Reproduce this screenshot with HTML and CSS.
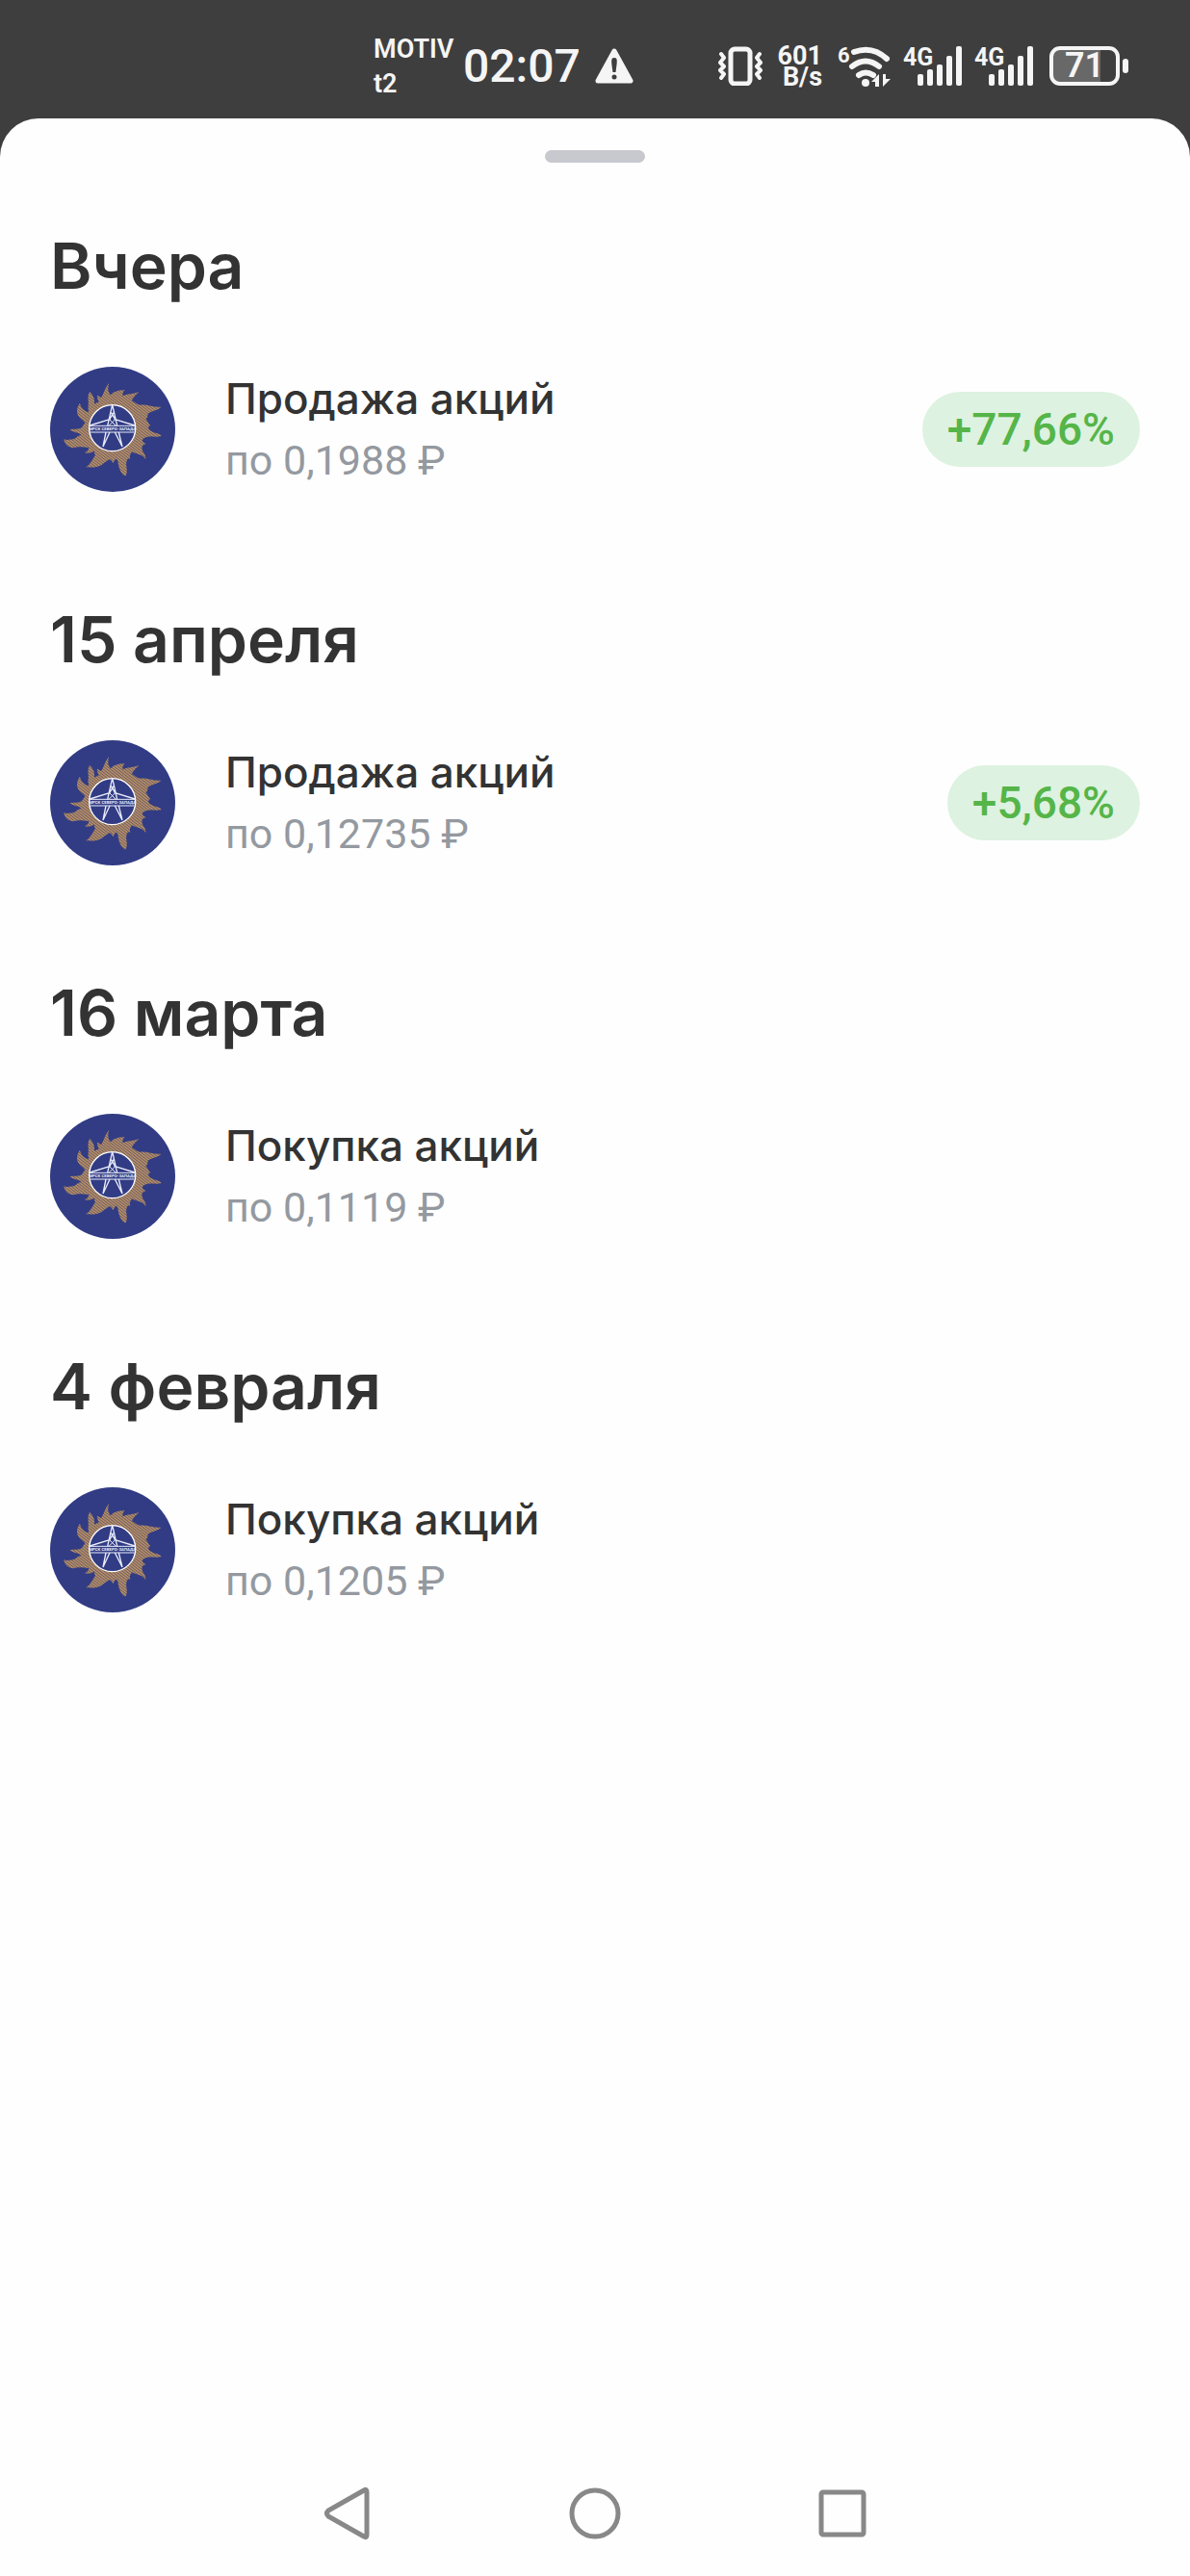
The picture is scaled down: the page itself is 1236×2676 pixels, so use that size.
FILE: index.html
```html
<!DOCTYPE html>
<html lang="ru">
<head>
    <meta charset="UTF-8">
    <meta name="viewport" content="width=device-width, initial-scale=1.0">
    <title>История сделок</title>
    <link rel="stylesheet" href="styles.css">
</head>
<body>
    <!-- Shared drawings -->
    <svg class="defs" aria-hidden="true">
        <defs>
            <pattern id="hatch" width="7" height="7" patternUnits="userSpaceOnUse" patternTransform="rotate(38)">
                <rect width="7" height="7" fill="#b38d66"/>
                <rect width="7" height="2" fill="#5d5063"/>
            </pattern>
        </defs>
        <symbol id="logo" viewBox="36 33 390 390">
            <circle cx="231" cy="228" r="195" fill="#313c84"/>
            <path fill="url(#hatch)" d="M220 84C214 101 217 113 225 121C232 112 246 106 269 106C262 112 261 119 263 124C276 116 294 119 313 111C305 121 294 127 291 139C301 143 305 150 315 152C338 149 358 160 382 158C369 171 353 169 343 178C337 184 344 190 334 196C342 203 341 211 349 216C341 219 340 225 346 230C357 240 370 237 384 248C367 255 347 246 330 255C318 262 325 269 335 273C324 276 321 281 323 290C324 301 336 306 334 321C321 303 304 307 292 298C284 305 283 315 286 321C281 317 278 319 275 326C269 342 282 355 271 374C259 368 252 354 249 339C247 329 249 321 240 320C237 325 235 330 231 334C231 328 227 324 222 322C205 330 196 345 178 345C170 349 162 344 147 346C161 338 165 326 177 308C174 302 172 298 175 294C166 303 155 303 142 301C152 299 156 292 157 285C138 284 126 280 110 286C92 285 83 276 78 258C88 263 98 260 108 259C116 257 121 247 134 246C129 239 112 240 97 229C109 225 121 229 132 224C139 221 136 215 145 209C143 201 127 195 123 184C117 171 121 157 129 146C132 163 144 172 155 174C158 169 153 165 155 156C158 142 150 128 159 111C170 120 176 133 174 148C179 149 181 142 188 143C186 136 181 127 183 122C189 124 190 129 196 128C205 114 207 97 220 84Z"/>
            <circle cx="230" cy="224" r="72" fill="#313c84" stroke="#fff" stroke-width="4"/>
            <g fill="none" stroke="#e9ebfa" stroke-width="4">
                <path d="M158 217H302M162 237H298" stroke-width="3"/>
                <path d="M230 151L215 217M230 151L245 217M210 237L201 282L222 237M250 237L261 282L238 237M226 176L239 197M234 176L221 197M160 216L224 196M300 216L236 196"/>
                <path d="M221 197L241 217M239 197L219 217" stroke-width="3"/>
            </g>
            <text class="logo-text" x="230" y="232" text-anchor="middle">МРСК СЕВЕРО-ЗАПАДА</text>
        </symbol>
        <symbol id="signal" viewBox="0 0 62 41">
            <text class="net-text" x="0" y="20">4G</text>
            <rect x="15" y="29" width="6" height="12" rx="2"/>
            <rect x="25" y="24" width="6" height="17" rx="2"/>
            <rect x="35" y="19" width="6" height="22" rx="2"/>
            <rect x="45" y="10" width="6" height="31" rx="2"/>
            <rect x="55" y="0" width="6" height="41" rx="2"/>
        </symbol>
    </svg>

    <header class="status-bar">
        <div class="carrier">MOTIV<br>t2</div>
        <time class="clock">02:07</time>
        <svg class="warning" viewBox="0 0 42 38">
            <path d="M21 3L38 34H4Z" fill="#f5f5f5" stroke="#f5f5f5" stroke-width="5" stroke-linejoin="round"/>
            <path d="M21 10C25 10 24 14 22.500 25H19.500C18 14 17 10 21 10Z" fill="#3e3e3e"/>
            <circle cx="21" cy="30" r="2.500" fill="#3e3e3e"/>
        </svg>
        <div class="status-icons">
            <svg class="vibrate" viewBox="0 0 46 41" fill="none" stroke="#f5f5f5" stroke-width="5" stroke-linecap="round" stroke-linejoin="round">
                <rect x="13" y="3" width="20" height="36" rx="4"/>
                <path d="M3 8L6 12L2 17L6 21L2 25L6 29L3 33M43 8L40 12L44 17L40 21L44 25L40 29L43 33" stroke-width="4"/>
            </svg>
            <div class="speed">601<br>B/s</div>
            <svg class="wifi" viewBox="0 0 56 42">
                <text class="wifi-text" x="0" y="17">6</text>
                <g fill="none" stroke="#f5f5f5" stroke-width="6" stroke-linecap="round">
                    <path d="M17 6Q36 -1 51 13M15 21Q29 10 43 21M22 30Q29 25 37 30"/>
                </g>
                <circle cx="29" cy="38" r="4" fill="#f5f5f5"/>
                <path d="M43 29V42H39V37H35ZM47 29H50V34H55L47 42Z" fill="#f5f5f5"/>
            </svg>
            <svg class="signal"><use href="#signal"/></svg>
            <svg class="signal"><use href="#signal"/></svg>
            <div class="battery"><span class="battery-body">71</span><span class="battery-cap"></span></div>
        </div>
    </header>

    <main class="sheet">
        <div class="handle"></div>

        <section class="group">
            <h2>Вчера</h2>
            <div class="deal">
                <svg class="logo"><use href="#logo"/></svg>
                <div class="deal-info">
                    <p class="deal-title">Продажа акций</p>
                    <p class="deal-price">по 0,1988 ₽</p>
                </div>
                <span class="badge">+77,66%</span>
            </div>
        </section>

        <section class="group">
            <h2>15 апреля</h2>
            <div class="deal">
                <svg class="logo"><use href="#logo"/></svg>
                <div class="deal-info">
                    <p class="deal-title">Продажа акций</p>
                    <p class="deal-price">по 0,12735 ₽</p>
                </div>
                <span class="badge">+5,68%</span>
            </div>
        </section>

        <section class="group">
            <h2>16 марта</h2>
            <div class="deal">
                <svg class="logo"><use href="#logo"/></svg>
                <div class="deal-info">
                    <p class="deal-title">Покупка акций</p>
                    <p class="deal-price">по 0,1119 ₽</p>
                </div>
            </div>
        </section>

        <section class="group">
            <h2>4 февраля</h2>
            <div class="deal">
                <svg class="logo"><use href="#logo"/></svg>
                <div class="deal-info">
                    <p class="deal-title">Покупка акций</p>
                    <p class="deal-price">по 0,1205 ₽</p>
                </div>
            </div>
        </section>

        <nav class="nav-bar">
            <button type="button" aria-label="Назад">
                <svg viewBox="0 0 56 56"><path d="M45 4Q48 2 48 6V50Q48 54 45 52L8 31Q5 28 8 25Z"/></svg>
            </button>
            <button type="button" aria-label="Домой">
                <svg viewBox="0 0 56 56"><circle cx="28" cy="28" r="24"/></svg>
            </button>
            <button type="button" aria-label="Недавние">
                <svg viewBox="0 0 56 56"><rect x="6" y="6" width="44" height="44" rx="2"/></svg>
            </button>
        </nav>
    </main>
</body>
</html>
```
FILE: styles.css
```css
* { box-sizing: border-box; }
body { margin: 0; min-height: 100vh; display: flex; flex-direction: column; background-color: #3e3e3e; color: #333; font-family: Roboto, sans-serif; }
h2, p { margin: 0; }
.defs { position: absolute; width: 0; height: 0; }

/* Status bar */
.status-bar { display: flex; align-items: center; height: 123px; padding: 14px 64px 0 388px; color: #f5f5f5; }
.carrier { width: 93px; font-size: 27px; line-height: 36px; font-weight: 600; }
.clock { font-size: 48px; line-height: 56px; font-weight: 500; }
.warning { width: 42px; height: 38px; margin-left: 14px; }
.status-icons { display: flex; align-items: center; gap: 12px; margin-left: auto; }
.vibrate { width: 46px; height: 41px; }
.speed { margin-left: 4px; font-size: 27px; line-height: 22px; font-weight: 700; text-align: right; }
.wifi { width: 56px; height: 42px; margin-left: 4px; overflow: visible; }
.signal { width: 62px; height: 41px; fill: #f5f5f5; }
.net-text { font-size: 25px; font-weight: 700; fill: #f5f5f5; }
.wifi-text { font-size: 22px; font-weight: 700; fill: #f5f5f5; }
.battery { display: flex; align-items: center; gap: 3px; margin-left: 4px; }
.battery-body { width: 73px; height: 41px; border: 4px solid #f5f5f5; border-radius: 11px; background: linear-gradient(to right, #686868 75%, #3e3e3e 75%); font-size: 36px; line-height: 33px; font-weight: 600; text-align: center; }
.battery-cap { width: 6px; height: 15px; border-radius: 3px; background-color: #f5f5f5; }

/* Sheet */
.sheet { flex: 1; display: flex; flex-direction: column; padding: 33px 52px 0; border-radius: 40px 40px 0 0; background-color: #fefefe; }
.handle { align-self: center; width: 104px; height: 13px; margin-bottom: 67px; border-radius: 7px; background-color: #c8c9ce; }
.group { margin-bottom: 113px; }
.group h2 { margin-bottom: 65px; font-family: Inter, Roboto, sans-serif; font-size: 66px; line-height: 80px; font-weight: 600; }
.deal { display: flex; align-items: center; }
.logo { flex: none; width: 130px; height: 130px; margin-right: 52px; }
.logo-text { font-size: 13px; font-weight: 700; fill: #e9ebfa; }
.deal-info { flex: 1; }
.deal-title { font-family: Inter, Roboto, sans-serif; font-size: 44px; line-height: 64px; font-weight: 500; }
.deal-price { font-size: 43px; line-height: 64px; color: #9499a0; }
.badge { padding: 0 26px; border-radius: 39px; background-color: #ddf2e0; color: #55b548; font-size: 46px; line-height: 78px; font-weight: 500; }

/* Navigation buttons */
.nav-bar { display: flex; justify-content: center; margin-top: auto; padding-bottom: 37px; }
.nav-bar button { width: 257px; padding: 0; border: none; background: none; cursor: pointer; }
.nav-bar svg { display: block; width: 56px; height: 56px; margin: auto; fill: none; stroke: #888; stroke-width: 5; }
```
